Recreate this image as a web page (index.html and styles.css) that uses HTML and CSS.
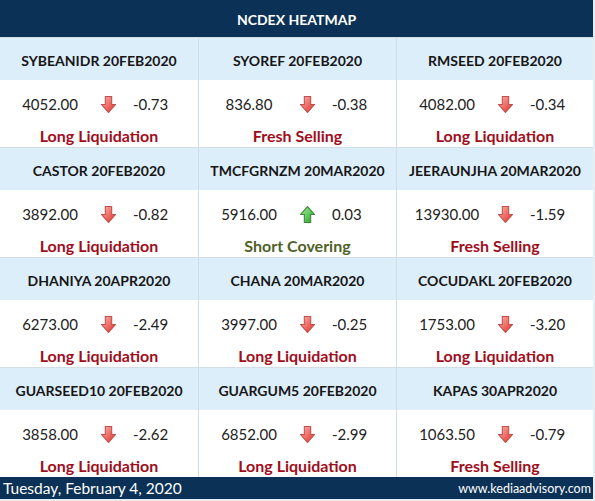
FILE: index.html
```html
<!DOCTYPE html>
<html>
<head>
<meta charset="utf-8">
<link rel="stylesheet" href="styles.css">
</head>
<body>
<div class="sheet">
  <div class="title">NCDEX HEATMAP</div>
  <div class="board">
    <div class="cell">
      <div class="name">SYBEANIDR 20FEB2020</div>
      <div class="body">
        <div class="vals"><span class="num">4052.00</span><svg class="arrow" viewBox="0 0 14 16"><use href="#down"/></svg><span class="chg">-0.73</span></div>
        <div class="status red">Long Liquidation</div>
      </div>
    </div>
    <div class="cell">
      <div class="name">SYOREF 20FEB2020</div>
      <div class="body">
        <div class="vals"><span class="num">836.80</span><svg class="arrow" viewBox="0 0 14 16"><use href="#down"/></svg><span class="chg">-0.38</span></div>
        <div class="status red">Fresh Selling</div>
      </div>
    </div>
    <div class="cell">
      <div class="name">RMSEED 20FEB2020</div>
      <div class="body">
        <div class="vals"><span class="num">4082.00</span><svg class="arrow" viewBox="0 0 14 16"><use href="#down"/></svg><span class="chg">-0.34</span></div>
        <div class="status red">Long Liquidation</div>
      </div>
    </div>

    <div class="cell">
      <div class="name">CASTOR 20FEB2020</div>
      <div class="body">
        <div class="vals"><span class="num">3892.00</span><svg class="arrow" viewBox="0 0 14 16"><use href="#down"/></svg><span class="chg">-0.82</span></div>
        <div class="status red">Long Liquidation</div>
      </div>
    </div>
    <div class="cell">
      <div class="name">TMCFGRNZM 20MAR2020</div>
      <div class="body">
        <div class="vals"><span class="num">5916.00</span><svg class="arrow" viewBox="0 0 14 16"><use href="#up"/></svg><span class="chg">0.03</span></div>
        <div class="status green">Short Covering</div>
      </div>
    </div>
    <div class="cell">
      <div class="name">JEERAUNJHA 20MAR2020</div>
      <div class="body">
        <div class="vals"><span class="num">13930.00</span><svg class="arrow" viewBox="0 0 14 16"><use href="#down"/></svg><span class="chg">-1.59</span></div>
        <div class="status red">Fresh Selling</div>
      </div>
    </div>

    <div class="cell">
      <div class="name">DHANIYA 20APR2020</div>
      <div class="body">
        <div class="vals"><span class="num">6273.00</span><svg class="arrow" viewBox="0 0 14 16"><use href="#down"/></svg><span class="chg">-2.49</span></div>
        <div class="status red">Long Liquidation</div>
      </div>
    </div>
    <div class="cell">
      <div class="name">CHANA 20MAR2020</div>
      <div class="body">
        <div class="vals"><span class="num">3997.00</span><svg class="arrow" viewBox="0 0 14 16"><use href="#down"/></svg><span class="chg">-0.25</span></div>
        <div class="status red">Long Liquidation</div>
      </div>
    </div>
    <div class="cell">
      <div class="name">COCUDAKL 20FEB2020</div>
      <div class="body">
        <div class="vals"><span class="num">1753.00</span><svg class="arrow" viewBox="0 0 14 16"><use href="#down"/></svg><span class="chg">-3.20</span></div>
        <div class="status red">Long Liquidation</div>
      </div>
    </div>

    <div class="cell">
      <div class="name">GUARSEED10 20FEB2020</div>
      <div class="body">
        <div class="vals"><span class="num">3858.00</span><svg class="arrow" viewBox="0 0 14 16"><use href="#down"/></svg><span class="chg">-2.62</span></div>
        <div class="status red">Long Liquidation</div>
      </div>
    </div>
    <div class="cell">
      <div class="name">GUARGUM5 20FEB2020</div>
      <div class="body">
        <div class="vals"><span class="num">6852.00</span><svg class="arrow" viewBox="0 0 14 16"><use href="#down"/></svg><span class="chg">-2.99</span></div>
        <div class="status red">Long Liquidation</div>
      </div>
    </div>
    <div class="cell">
      <div class="name">KAPAS 30APR2020</div>
      <div class="body">
        <div class="vals"><span class="num">1063.50</span><svg class="arrow" viewBox="0 0 14 16"><use href="#down"/></svg><span class="chg">-0.79</span></div>
        <div class="status red">Fresh Selling</div>
      </div>
    </div>
  </div>
  <div class="footer">
    <span class="date">Tuesday, February 4, 2020</span>
    <span class="site">www.kediaadvisory.com</span>
  </div>
</div>

<svg class="defs" width="0" height="0">
  <defs>
    <linearGradient id="gred" x1="0" y1="0" x2="1" y2="1">
      <stop offset="0" stop-color="#f8b4b0"/>
      <stop offset="0.55" stop-color="#ef6a63"/>
      <stop offset="1" stop-color="#d8302c"/>
    </linearGradient>
    <linearGradient id="ggreen" x1="0" y1="0" x2="1" y2="1">
      <stop offset="0" stop-color="#b4eab0"/>
      <stop offset="0.55" stop-color="#5cc757"/>
      <stop offset="1" stop-color="#2f9a2b"/>
    </linearGradient>
    <symbol id="down" viewBox="0 0 14 16">
      <path d="M4 0.5 H10 V8 H13.5 L7 15.5 L0.5 8 H4 Z" fill="url(#gred)" stroke="#c0504d" stroke-width="1" stroke-linejoin="miter"/>
    </symbol>
    <symbol id="up" viewBox="0 0 14 16">
      <path d="M4 15.5 H10 V8 H13.5 L7 0.5 L0.5 8 H4 Z" fill="url(#ggreen)" stroke="#3d8a3a" stroke-width="1" stroke-linejoin="miter"/>
    </symbol>
  </defs>
</svg>
</body>
</html>
```

FILE: styles.css
```css
html, body {
  margin: 0;
  padding: 0;
  background: #e6eef6;
}

.sheet {
  width: 593px;
  height: 499px;
  display: flex;
  flex-direction: column;
  font-family: "Lato", "Liberation Sans", sans-serif;
}

.title {
  height: 37px;
  background: #0b3156;
  color: #ffffff;
  font-weight: 700;
  font-size: 14px;
  display: flex;
  align-items: center;
  justify-content: center;
  padding-top: 1px;
  box-sizing: border-box;
}

.board {
  display: grid;
  grid-template-columns: 198px 198px 197px;
  grid-auto-rows: 110px;
}

.cell {
  display: flex;
  flex-direction: column;
  border-left: 1px solid #d2dde6;
}

.cell:nth-child(3n+1) {
  border-left: none;
}

.name {
  height: 43px;
  background: #ddeefb;
  color: #161616;
  font-weight: 700;
  font-size: 14px;
  display: flex;
  align-items: center;
  justify-content: center;
  padding-top: 3px;
  box-sizing: border-box;
  white-space: nowrap;
  border-top: 1px solid #d2dde6;
}

.body {
  flex: 1;
  background: #ffffff;
  display: flex;
  flex-direction: column;
}

.vals {
  display: grid;
  grid-template-columns: 100px 16px 1fr;
  align-items: center;
  height: 25px;
  margin-top: 11px;
  color: #222222;
  font-size: 15px;
}

.num {
  text-align: center;
}

.arrow {
  width: 15px;
  height: 17px;
  justify-self: center;
  margin-top: 2px;
}

.chg {
  padding-left: 17px;
}

.status {
  margin-top: 10px;
  text-align: center;
  font-weight: 700;
  font-size: 16px;
}

.red {
  color: #a00e1c;
}

.green {
  color: #4f6228;
}

.footer {
  height: 22px;
  background: #0b3156;
  color: #ffffff;
  display: flex;
  align-items: center;
  justify-content: space-between;
  padding: 0 2px 0 3px;
}

.date {
  font-size: 15.5px;
}

.site {
  font-size: 12.5px;
}

.defs {
  position: absolute;
  width: 0;
  height: 0;
}
```
